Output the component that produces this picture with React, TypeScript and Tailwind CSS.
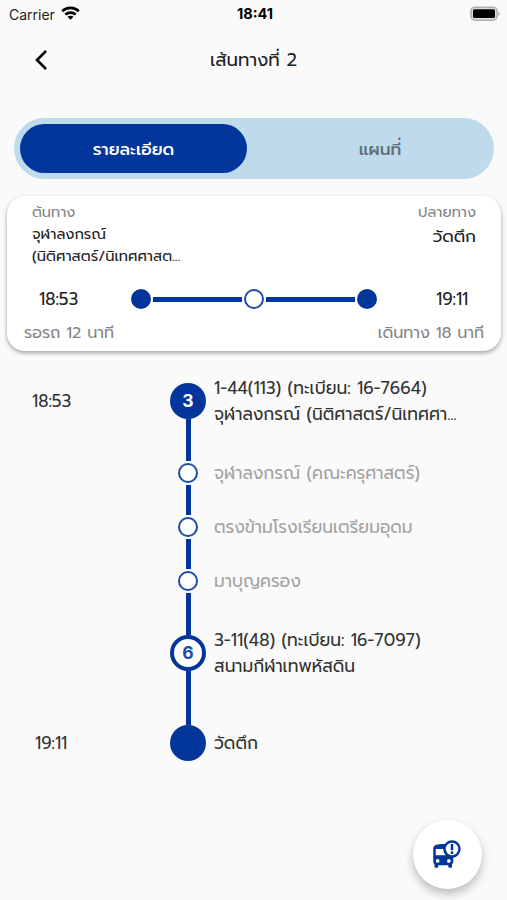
// RouteDetailPage - รายละเอียดเส้นทาง
import { MdBusAlert } from 'react-icons/md';

type Stop = {
  time?: string;
  timeClass?: string;
  lines: string[];
  node: 'start' | 'stop' | 'transfer' | 'end';
  badge?: string;
  rowClass: string;
  lineClass?: string;
};

const stops: Stop[] = [
  {
    time: '18:53',
    timeClass: 'pl-[32px]',
    lines: ['1-44(113) (ทะเบียน: 16-7664)', 'จุฬาลงกรณ์ (นิติศาสตร์/นิเทศศา...'],
    node: 'start',
    badge: '3',
    rowClass: 'h-[80px]',
    lineClass: 'mb-[2px]',
  },
  {
    lines: ['จุฬาลงกรณ์ (คณะครุศาสตร์)'],
    node: 'stop',
    rowClass: 'h-[54px]',
    lineClass: 'my-[2px]',
  },
  {
    lines: ['ตรงข้ามโรงเรียนเตรียมอุดม'],
    node: 'stop',
    rowClass: 'h-[54px]',
    lineClass: 'my-[2px]',
  },
  {
    lines: ['มาบุญครอง'],
    node: 'stop',
    rowClass: 'h-[64px]',
    lineClass: 'mt-[2px]',
  },
  {
    lines: ['3-11(48) (ทะเบียน: 16-7097)', 'สนามกีฬาเทพหัสดิน'],
    node: 'transfer',
    badge: '6',
    rowClass: 'h-[90px]',
    lineClass: '',
  },
  {
    time: '19:11',
    timeClass: 'pl-[35px]',
    lines: ['วัดตึก'],
    node: 'end',
    rowClass: 'h-[36px]',
  },
];

const nodeClass = {
  start: 'size-9 bg-[#03369b] text-white',
  stop: 'size-5 border-2 border-[#1d4ba7] bg-white',
  transfer: 'size-9 border-4 border-[#03369b] bg-white text-[#1d4ba7]',
  end: 'size-9 bg-[#03369b]',
};

const StatusBar = () => (
  <div className="flex h-7 items-center justify-between pr-[6px] pl-[9px] font-['Inter',sans-serif] text-[14px] text-[#222]">
    <div className="flex w-[100px] items-center gap-[6px]">
      <span>Carrier</span>
      <svg className="-mt-[2px]" width="19" height="14" viewBox="0 0 19 14" fill="none" stroke="#000" strokeWidth="2.6">
        <path d="M1.2 5.2C5.8 .8 13.2 .8 17.8 5.2" />
        <path d="M4.3 8.6C7.2 5.9 11.8 5.9 14.7 8.6" />
        <path d="M9.5 13.8L6.5 10.8C8.3 9.3 10.7 9.3 12.5 10.8Z" fill="#000" stroke="none" />
      </svg>
    </div>
    <span className="text-[14.5px] font-bold text-black">18:41</span>
    <div className="flex w-[100px] justify-end">
      <svg className="-mt-px" width="31" height="16" viewBox="0 0 31 16">
        <rect x="1" y="1.2" width="26" height="13" rx="4" fill="#ddd" stroke="#b0b0b0" strokeWidth="1.6" />
        <rect x="3" y="3.3" width="22" height="8.8" rx="1.5" fill="#000" />
        <path d="M28.3 5.2Q31.4 7.7 28.3 10.2Z" fill="#b0b0b0" />
      </svg>
    </div>
  </div>
);

const SummaryCard = () => (
  <section className="mx-[7px] mt-[17px] h-[155px] w-[494px] rounded-[18px] bg-white pt-[6px] shadow-[0_2px_4px_rgba(0,0,0,0.36)]">
    <div className="flex h-[76px] justify-between pr-[25px] pl-[25px]">
      <div className="whitespace-nowrap">
        <p className="h-[21px] text-[14.6px] leading-[20px] text-[#858585]">ต้นทาง</p>
        <p className="text-[14.7px] leading-[22px]">จุฬาลงกรณ์</p>
        <p className="text-[14.7px] leading-[22px]">(นิติศาสตร์/นิเทศศาสต...</p>
      </div>
      <div className="text-right whitespace-nowrap">
        <p className="text-[14.6px] leading-[20px] text-[#858585]">ปลายทาง</p>
        <p className="text-[17px] leading-[28px]">วัดตึก</p>
      </div>
    </div>

    {/* เวลาออก - เวลาถึง */}
    <div className="flex h-[42px] items-center pl-[32px]">
      <span className="w-[92px] pt-[2px] text-[17px]">18:53</span>
      <div className="flex w-[246px] items-center gap-[2px]">
        <span className="size-5 shrink-0 rounded-full bg-[#03369b]" />
        <span className="h-[5px] flex-1 bg-[#03369b]" />
        <span className="size-5 shrink-0 rounded-full border-2 border-[#1d4ba7]" />
        <span className="h-[5px] flex-1 bg-[#03369b]" />
        <span className="size-5 shrink-0 rounded-full bg-[#03369b]" />
      </div>
      <span className="ml-[59px] pt-[2px] text-[17px]">19:11</span>
    </div>

    <div className="flex h-[26px] items-center justify-between pr-[17px] pl-[17px] text-[16px] text-[#858585]">
      <span>รอรถ 12 นาที</span>
      <span>เดินทาง 18 นาที</span>
    </div>
  </section>
);

const StopRow = ({ stop }: { stop: Stop }) => {
  const small = stop.node === 'stop';

  return (
    <li className={`flex ${stop.rowClass}`}>
      <div
        className={`flex h-[37px] w-[170px] items-center text-[17px] text-[#333] ${stop.timeClass ?? ''}`}
      >
        {stop.time}
      </div>
      <div className="flex w-9 flex-col items-center">
        <span
          className={`flex shrink-0 items-center justify-center rounded-full font-['Inter',sans-serif] text-[17.5px] font-bold ${nodeClass[stop.node]}`}
        >
          {stop.badge}
        </span>
        {stop.lineClass !== undefined && (
          <span className={`w-[5px] flex-1 bg-[#03369b] ${stop.lineClass}`} />
        )}
      </div>
      <div
        className={`ml-2 flex flex-col justify-center text-[17.1px] whitespace-nowrap ${
          small ? 'h-5 text-[#a3a3a3]' : 'h-9 text-[#333]'
        }`}
      >
        {stop.lines.map((line) => (
          <p key={line} className="leading-[26px]">
            {line}
          </p>
        ))}
      </div>
    </li>
  );
};

const App: React.FC = () => {
  return (
    <main className="relative h-[900px] w-[507px] overflow-hidden bg-[#fafafa] font-['Prompt','Kanit','Lato','Noto_Sans_Thai',sans-serif] text-[#222]">
      <StatusBar />

      <header className="flex h-[62px] items-center">
        <button className="w-[90px] pt-px pl-[34px]" aria-label="ย้อนกลับ">
          <svg width="14" height="20" viewBox="0 0 14 20" fill="none" stroke="#000" strokeWidth="2.6">
            <path d="M12 1L3 10L12 19" />
          </svg>
        </button>
        <h1 className="flex-1 pt-[3px] text-center text-[18.2px]">เส้นทางที่ 2</h1>
        <div className="w-[90px]" />
      </header>

      {/* แท็บ รายละเอียด / แผนที่ */}
      <div className="mx-[14px] mt-[28px] flex h-[61px] w-[480px] rounded-full bg-[#bfdbeb] p-[6px] text-[17px] font-medium">
        <button className="h-[49px] w-[227px] rounded-full bg-[#03369b] pt-[2px] text-white">
          รายละเอียด
        </button>
        <button className="flex-1 pt-[2px] pl-[25px] text-[#5f6f7d]">แผนที่</button>
      </div>

      <SummaryCard />

      {/* รายการป้ายรถ */}
      <ul className="mt-[32px]">
        {stops.map((stop, i) => (
          <StopRow key={i} stop={stop} />
        ))}
      </ul>

      <button
        className="absolute top-[820px] left-[413px] flex size-[69px] items-center justify-center rounded-full bg-white text-[#03369b] shadow-[0_5px_10px_rgba(0,0,0,0.25)]"
        aria-label="แจ้งเตือนรถ"
      >
        <MdBusAlert size={30} className="-mt-[2px] mr-px" />
      </button>
    </main>
  );
};

export default App;
